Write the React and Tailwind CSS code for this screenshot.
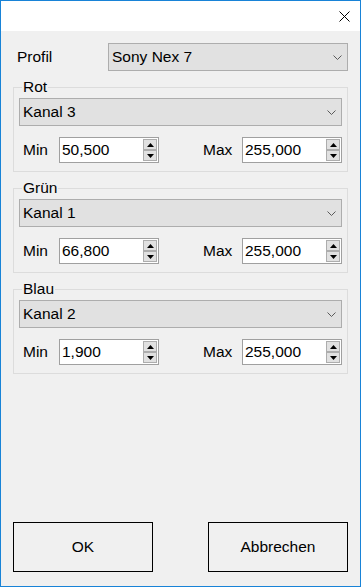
import React from "react";

const font = { fontFamily: '"Liberation Sans", Arial, sans-serif' };

function Chevron() {
  return (
    <svg width="9" height="5" viewBox="0 0 9 5" className="shrink-0">
      <path d="M0.5 0.5 L4.5 4.5 L8.5 0.5" fill="none" stroke="#5a5a5a" strokeWidth="1" />
    </svg>
  );
}

function Combo({ value, className = "" }) {
  return (
    <div
      className={
        "flex h-[28px] items-center justify-between border border-[#adadad] bg-[#e1e1e1] pl-[3px] pr-[5px] text-[15.5px] text-black " +
        className
      }
    >
      <span className="leading-none">{value}</span>
      <Chevron />
    </div>
  );
}

function SpinBtn({ up }) {
  return (
    <div className="flex h-[11px] w-[14px] items-center justify-center border border-[#adadad] bg-[#e1e1e1]">
      <svg width="7" height="4" viewBox="0 0 7 4">
        {up ? <path d="M0 4 L3.5 0 L7 4 Z" fill="#000" /> : <path d="M0 0 L3.5 4 L7 0 Z" fill="#000" />}
      </svg>
    </div>
  );
}

function Spin({ value }) {
  return (
    <div className="flex h-[26px] w-[100px] items-center border border-[#a0a0a0] bg-white pl-[2px] pr-[1px]">
      <span className="flex-1 text-[15.5px] leading-none text-black">{value}</span>
      <div className="flex flex-col">
        <SpinBtn up />
        <SpinBtn />
      </div>
    </div>
  );
}

function Group({ title, channel, min, max, className = "" }) {
  return (
    <fieldset className={"ml-[12px] w-[335px] border border-[#dcdcdc] pb-[8px] pl-[5px] pr-[5px] " + className}>
      <legend className="ml-[3px] px-[1px] text-[15.5px] leading-[18px] text-black">{title}</legend>
      <Combo value={channel} className="mt-[2px] w-[323px]" />
      <div className="mt-[11px] flex h-[26px] items-center">
        <span className="ml-[4px] w-[36px] text-[15.5px] leading-none text-black">Min</span>
        <Spin value={min} />
        <span className="ml-[44px] w-[39px] text-[15.5px] leading-none text-black">Max</span>
        <Spin value={max} />
      </div>
    </fieldset>
  );
}

export default function App() {
  return (
    <div style={font} className="flex h-[587px] w-[361px] flex-col border border-[#1883d7] bg-[#f0f0f0]">
      <div className="flex h-[30px] shrink-0 items-center justify-end bg-white pr-[10px]">
        <svg width="11" height="11" viewBox="0 0 11 11">
          <path d="M0.5 0.5 L10.5 10.5 M10.5 0.5 L0.5 10.5" stroke="#000" strokeWidth="1" />
        </svg>
      </div>
      <div className="flex flex-1 flex-col">
        <div className="mt-[12px] flex items-center">
          <span className="ml-[16px] w-[91px] text-[15.5px] leading-none text-black">Profil</span>
          <Combo value="Sony Nex 7" className="w-[240px]" />
        </div>
        <Group title="Rot" channel="Kanal 3" min="50,500" max="255,000" className="mt-[7px]" />
        <Group title="Grün" channel="Kanal 1" min="66,800" max="255,000" className="mt-[7px]" />
        <Group title="Blau" channel="Kanal 2" min="1,900" max="255,000" className="mt-[7px]" />
        <div className="mt-auto mb-[14px] flex justify-between px-[12px]">
          <button className="h-[50px] w-[140px] border border-black bg-[#f0f0f0] text-[15.5px] text-black">OK</button>
          <button className="h-[50px] w-[140px] border border-black bg-[#f0f0f0] text-[15.5px] text-black">Abbrechen</button>
        </div>
      </div>
    </div>
  );
}
